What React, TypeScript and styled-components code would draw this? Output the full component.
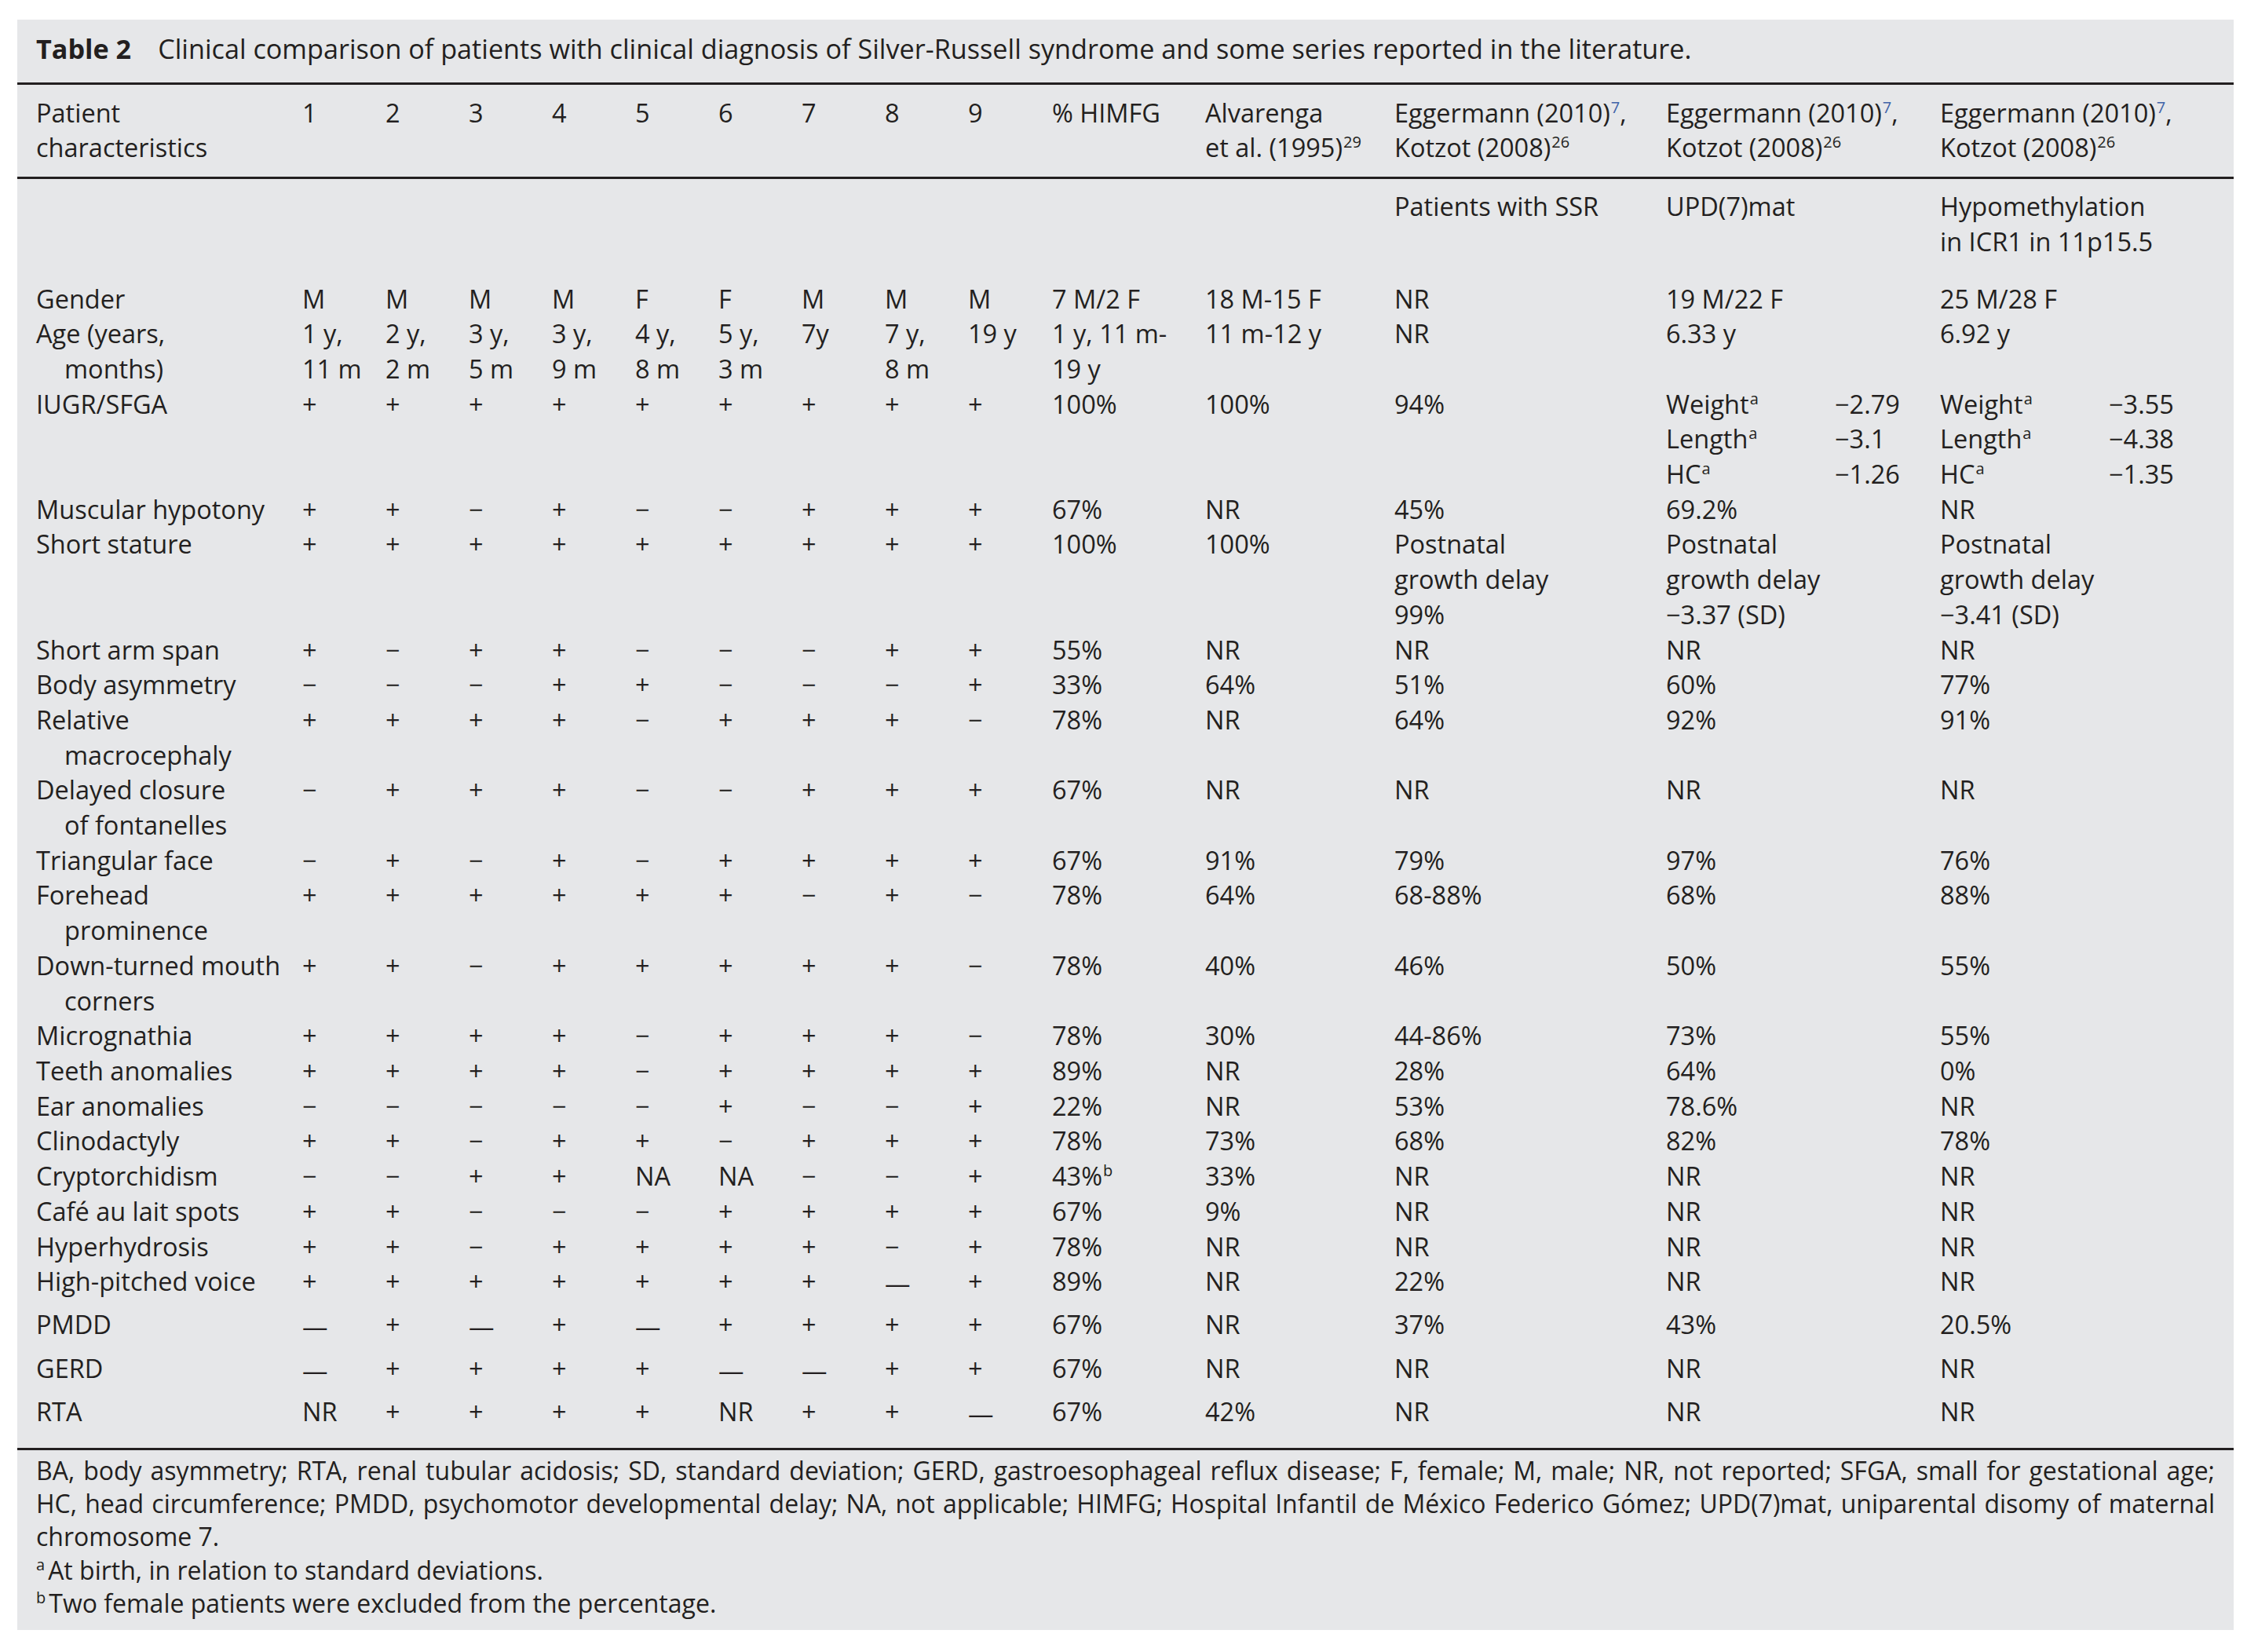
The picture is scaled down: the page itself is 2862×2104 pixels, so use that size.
import React from 'react'
import styled, { createGlobalStyle } from 'styled-components'

const GlobalStyle = createGlobalStyle`
  html, body {
    margin: 0;
    padding: 0;
    background: #ffffff;
  }
  body {
    font-family: 'Open Sans', 'Noto Sans', sans-serif;
    color: #231f20;
  }
`

const COLS = '339px repeat(8, 106px) 107px 195px 241px 346px 349px 1fr'

const Page = styled.div({
  padding: '25px 0 28px 22px',
})

const Panel = styled.div({
  width: '2823px',
  background: '#e6e7e9',
  fontSize: '32.5px',
  lineHeight: '44.7px',
})

const Caption = styled.div({
  padding: '15px 24px 20px',
  borderBottom: '3px solid #231f20',
  whiteSpace: 'nowrap',
  fontSize: '34.2px',
})

const CaptionLabel = styled.span({
  fontWeight: 700,
  marginRight: '34px',
})

const HeadRow = styled.div({
  display: 'grid',
  gridTemplateColumns: COLS,
  padding: '14px 24px',
  borderBottom: '3px solid #231f20',
})

const Body = styled.div({
  borderBottom: '3px solid #231f20',
})

const Row = styled.div<{ $top: number; $bottom: number }>`
  display: grid;
  grid-template-columns: ${COLS};
  padding: ${(p) => p.$top}px 24px ${(p) => p.$bottom}px;
`

const Spacer = styled.div({
  height: '23px',
})

const Label = styled.div({
  whiteSpace: 'pre-line',
  paddingLeft: '36px',
  textIndent: '-36px',
})

const Value = styled.div({
  whiteSpace: 'pre-line',
})

// the long dash sits a little lower than the minus sign in the original
const LongDash = styled.span({
  position: 'relative',
  top: '3px',
})

const SubGrid = styled.div({
  display: 'grid',
  gridTemplateColumns: '215px auto',
})

const SupMark = styled.sup<{ $blue?: boolean }>`
  font-size: 20px;
  line-height: 0;
  vertical-align: 0;
  position: relative;
  top: -12px;
  margin-left: 1px;
  color: ${(p) => (p.$blue ? '#3f63a8' : 'inherit')};
`

const Notes = styled.div({
  padding: '5px 24px 12px',
  lineHeight: '42.4px',
  fontSize: '32px',
})

const NoteLine = styled.div<{ $justify?: boolean }>`
  white-space: ${(p) => (p.$justify ? 'normal' : 'nowrap')};
  text-align: ${(p) => (p.$justify ? 'justify' : 'left')};
  text-align-last: ${(p) => (p.$justify ? 'justify' : 'left')};
`

const NoteMark = styled.sup({
  fontSize: '20px',
  lineHeight: 0,
  verticalAlign: 0,
  position: 'relative',
  top: '-12px',
  marginRight: '4px',
})

type Cell = React.ReactNode

interface DataRow {
  label: string
  cells: Cell[]
  loose?: boolean
}

const Sup: React.FC<{ blue?: boolean; children: React.ReactNode }> = ({ blue, children }) => (
  <SupMark $blue={blue}>{children}</SupMark>
)

const Egg = () => (
  <>
    Eggermann (2010)<Sup blue>7</Sup>,{'\n'}Kotzot (2008)<Sup>26</Sup>
  </>
)

const Measures: React.FC<{ values: string[] }> = ({ values }) => (
  <SubGrid>
    <span>
      Weight<Sup>a</Sup>
    </span>
    <span>{values[0]}</span>
    <span>
      Length<Sup>a</Sup>
    </span>
    <span>{values[1]}</span>
    <span>
      HC<Sup>a</Sup>
    </span>
    <span>{values[2]}</span>
  </SubGrid>
)

// m = minus sign, M = long dash
const signs = (s: string): Cell[] =>
  s.split(' ').map((v) => (v === 'm' ? '−' : v === 'M' ? <LongDash>—</LongDash> : v))

const rows: DataRow[] = [
  { label: 'Gender', cells: [...'M M M M F F M M M'.split(' '), '7 M/2 F', '18 M-15 F', 'NR', '19 M/22 F', '25 M/28 F'] },
  {
    label: 'Age (years,\nmonths)',
    cells: ['1 y,\n11 m', '2 y,\n2 m', '3 y,\n5 m', '3 y,\n9 m', '4 y,\n8 m', '5 y,\n3 m', '7y', '7 y,\n8 m', '19 y', '1 y, 11 m-\n19 y', '11 m-12 y', 'NR', '6.33 y', '6.92 y'],
  },
  {
    label: 'IUGR/SFGA',
    cells: [...signs('+ + + + + + + + +'), '100%', '100%', '94%', <Measures values={['−2.79', '−3.1', '−1.26']} />, <Measures values={['−3.55', '−4.38', '−1.35']} />],
  },
  { label: 'Muscular hypotony', cells: [...signs('+ + m + m m + + +'), '67%', 'NR', '45%', '69.2%', 'NR'] },
  {
    label: 'Short stature',
    cells: [...signs('+ + + + + + + + +'), '100%', '100%', 'Postnatal\ngrowth delay\n99%', 'Postnatal\ngrowth delay\n−3.37 (SD)', 'Postnatal\ngrowth delay\n−3.41 (SD)'],
  },
  { label: 'Short arm span', cells: [...signs('+ m + + m m m + +'), '55%', 'NR', 'NR', 'NR', 'NR'] },
  { label: 'Body asymmetry', cells: [...signs('m m m + + m m m +'), '33%', '64%', '51%', '60%', '77%'] },
  { label: 'Relative\nmacrocephaly', cells: [...signs('+ + + + m + + + m'), '78%', 'NR', '64%', '92%', '91%'] },
  { label: 'Delayed closure\nof fontanelles', cells: [...signs('m + + + m m + + +'), '67%', 'NR', 'NR', 'NR', 'NR'] },
  { label: 'Triangular face', cells: [...signs('m + m + m + + + +'), '67%', '91%', '79%', '97%', '76%'] },
  { label: 'Forehead\nprominence', cells: [...signs('+ + + + + + m + m'), '78%', '64%', '68-88%', '68%', '88%'] },
  { label: 'Down-turned mouth\ncorners', cells: [...signs('+ + m + + + + + m'), '78%', '40%', '46%', '50%', '55%'] },
  { label: 'Micrognathia', cells: [...signs('+ + + + m + + + m'), '78%', '30%', '44-86%', '73%', '55%'] },
  { label: 'Teeth anomalies', cells: [...signs('+ + + + m + + + +'), '89%', 'NR', '28%', '64%', '0%'] },
  { label: 'Ear anomalies', cells: [...signs('m m m m m + m m +'), '22%', 'NR', '53%', '78.6%', 'NR'] },
  { label: 'Clinodactyly', cells: [...signs('+ + m + + m + + +'), '78%', '73%', '68%', '82%', '78%'] },
  {
    label: 'Cryptorchidism',
    cells: [...signs('m m + + NA NA m m +'), <>43%<Sup>b</Sup></>, '33%', 'NR', 'NR', 'NR'],
  },
  { label: 'Café au lait spots', cells: [...signs('+ + m m m + + + +'), '67%', '9%', 'NR', 'NR', 'NR'] },
  { label: 'Hyperhydrosis', cells: [...signs('+ + m + + + + m +'), '78%', 'NR', 'NR', 'NR', 'NR'] },
  { label: 'High-pitched voice', cells: [...signs('+ + + + + + + M +'), '89%', 'NR', '22%', 'NR', 'NR'] },
  { label: 'PMDD', cells: [...signs('M + M + M + + + +'), '67%', 'NR', '37%', '43%', '20.5%'], loose: true },
  { label: 'GERD', cells: [...signs('M + + + + M M + +'), '67%', 'NR', 'NR', 'NR', 'NR'], loose: true },
  { label: 'RTA', cells: [...signs('NR + + + + NR + + M'), '67%', '42%', 'NR', 'NR', 'NR'], loose: true },
]

const App: React.FC = () => {
  return (
    <Page>
      <GlobalStyle />
      <Panel>
        <Caption>
          <CaptionLabel>Table 2</CaptionLabel>
          Clinical comparison of patients with clinical diagnosis of Silver-Russell syndrome and some series reported in the
          literature.
        </Caption>
        <HeadRow>
          <Value>{'Patient\ncharacteristics'}</Value>
          {[1, 2, 3, 4, 5, 6, 7, 8, 9].map((n) => (
            <Value key={n}>{n}</Value>
          ))}
          <Value>% HIMFG</Value>
          <Value>
            Alvarenga{'\n'}et al. (1995)<Sup>29</Sup>
          </Value>
          <Value>
            <Egg />
          </Value>
          <Value>
            <Egg />
          </Value>
          <Value>
            <Egg />
          </Value>
        </HeadRow>
        <Body>
          <Row $top={13} $bottom={28}>
            <Label />
            {Array.from({ length: 11 }).map((_, i) => (
              <Value key={i} />
            ))}
            <Value>Patients with SSR</Value>
            <Value>UPD(7)mat</Value>
            <Value>{'Hypomethylation\nin ICR1 in 11p15.5'}</Value>
          </Row>
          {rows.map((r) => (
            <Row key={r.label} $top={r.loose ? 10.5 : 0} $bottom={0}>
              <Label>{r.label}</Label>
              {r.cells.map((c, i) => (
                <Value key={i}>{c}</Value>
              ))}
            </Row>
          ))}
          <Spacer />
        </Body>
        <Notes>
          <NoteLine $justify>
            BA, body asymmetry; RTA, renal tubular acidosis; SD, standard deviation; GERD, gastroesophageal reflux disease; F,
            female; M, male; NR, not reported; SFGA, small for gestational age;
          </NoteLine>
          <NoteLine $justify>
            HC, head circumference; PMDD, psychomotor developmental delay; NA, not applicable; HIMFG; Hospital Infantil de México
            Federico Gómez; UPD(7)mat, uniparental disomy of maternal
          </NoteLine>
          <NoteLine>chromosome 7.</NoteLine>
          <NoteLine>
            <NoteMark>a</NoteMark>At birth, in relation to standard deviations.
          </NoteLine>
          <NoteLine>
            <NoteMark>b</NoteMark>Two female patients were excluded from the percentage.
          </NoteLine>
        </Notes>
      </Panel>
    </Page>
  )
}

export default App
